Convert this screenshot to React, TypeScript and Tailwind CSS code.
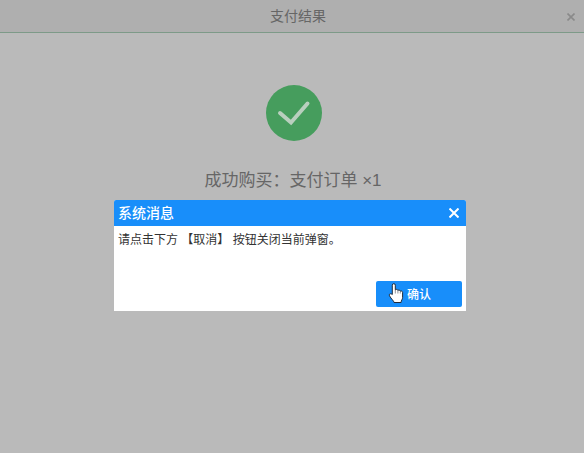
import React from 'react';

const SuccessMark: React.FC = () => (
  <svg viewBox="0 0 56 56" className="w-14 h-14" aria-hidden="true">
    <circle cx="28" cy="28" r="28" fill="#469d5d" />
    <path d="M14 28 25 37.500 41.500 18.500" fill="none" stroke="#b9cfbe" strokeWidth="4" strokeLinecap="round" strokeLinejoin="miter" />
  </svg>
);

const HandCursor: React.FC = () => (
  <svg viewBox="0 0 16 22" className="absolute left-3 top-0.5 w-4 h-[22px]" aria-hidden="true">
    <path
      d="M4.300 11.500V2.200a1.500 1.500 0 0 1 3 0v4.600c.8-.8 2.400-.5 2.600.6.8-.6 2.200-.2 2.400.8.9-.5 2.300 0 2.300 1.200v5c0 2-1.500 3-1.500 5.100H6c0-1.500-2.800-3.500-4.500-6.700-.8-1.600.8-2.900 2.800-1.300z"
      fill="#fff"
      stroke="#222b38"
      strokeWidth="1"
      strokeLinejoin="round"
    />
    <path d="M7.300 7V10.500M9.900 7.500V10.500M12.300 8.500V10.500" stroke="#222b38" strokeWidth="0.5" />
  </svg>
);

const MessageDialog: React.FC = () => (
  <div className="absolute inset-0 flex items-start justify-center pt-[200px] pr-1">
    <div role="dialog" aria-labelledby="dialog-title" className="w-[352px] rounded-t-xs bg-white overflow-hidden">
      <div className="h-[26px] pl-1 pr-1.5 flex items-center justify-between bg-[#188efa] text-white">
        <h2 id="dialog-title" className="text-[14px] leading-5 font-medium">系统消息</h2>
        <button type="button" aria-label="关闭" className="p-px">
          <svg viewBox="0 0 10 10" className="w-2.5 h-2.5" aria-hidden="true">
            <path d="M0.500 0.500 9.500 9.500M9.500 0.500 0.500 9.500" stroke="currentColor" strokeWidth="2" />
          </svg>
        </button>
      </div>
      <p className="px-1 pt-1.5 text-xs text-[#333]">请点击下方 【取消】 按钮关闭当前弹窗。</p>
      <div className="flex justify-end pt-[33px] pr-1 pb-1">
        <button
          type="button"
          className="relative w-[86px] h-[26px] pt-0.5 rounded-xs bg-[#188efa] text-xs font-medium text-white"
        >
          <HandCursor />
          确认
        </button>
      </div>
    </div>
  </div>
);

const App: React.FC = () => {
  return (
    <div className="relative min-h-screen bg-[#bababa] text-[#666] font-['Liberation_Sans','Noto_Sans_CJK_SC',sans-serif]">
      <header className="relative h-[33px] flex items-center justify-center pl-3 bg-[#afafaf] border-b border-[#7d9a88]">
        <h1 className="text-[14px] leading-5">支付结果</h1>
        <button type="button" aria-label="关闭" className="absolute right-2 top-3 p-px text-[#8a8a8a]">
          <svg viewBox="0 0 8 8" className="w-2 h-2" aria-hidden="true">
            <path d="M0.500 0.500 7.500 7.500M7.500 0.500 0.500 7.500" stroke="currentColor" strokeWidth="1.6" />
          </svg>
        </button>
      </header>

      <main className="pt-[52px] pl-1 flex flex-col items-center">
        <SuccessMark />
        <p className="mt-[26px] pr-0.5 text-[17px] leading-7">成功购买：支付订单 ×1</p>
      </main>

      <MessageDialog />
    </div>
  );
};

export default App;
